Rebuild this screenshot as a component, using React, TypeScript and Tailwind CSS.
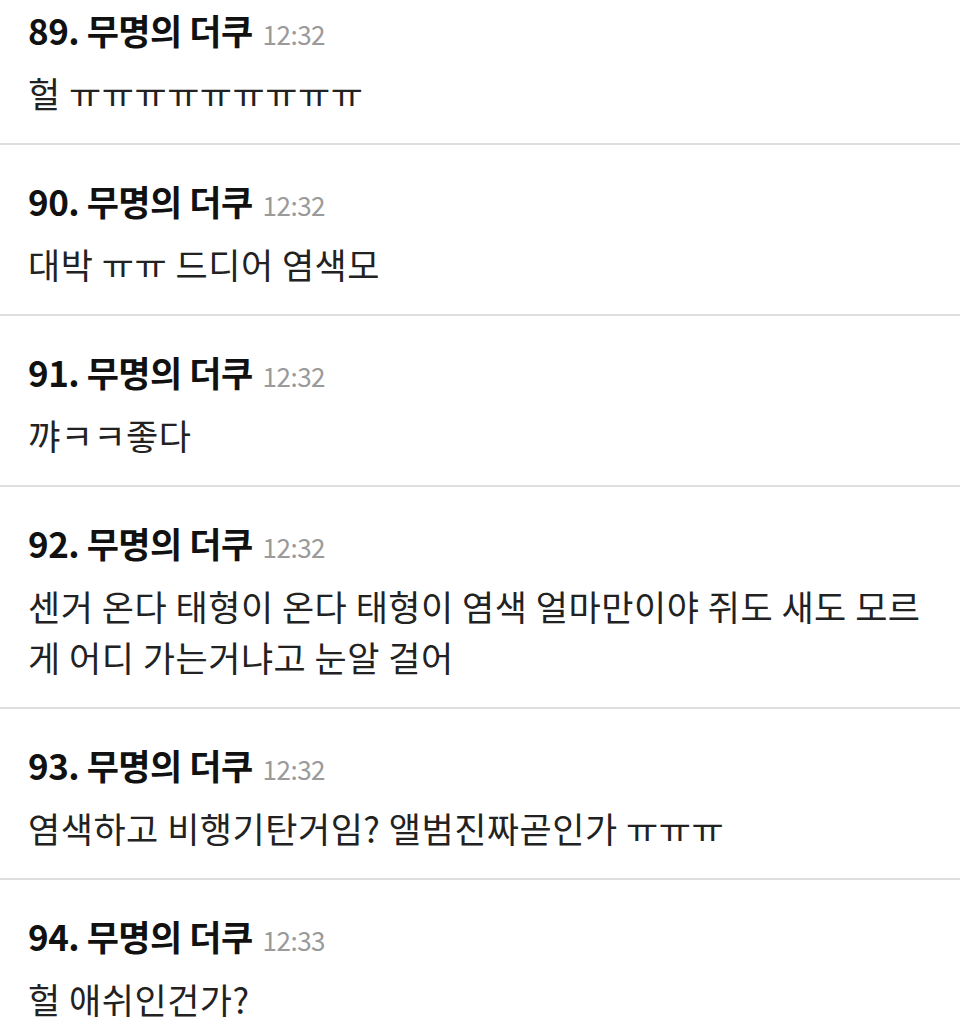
import React from 'react'

type Comment = {
    no: number
    time: string
    body: string
}

const comments: Comment[] = [
    { no: 89, time: '12:32', body: '헐 ㅠㅠㅠㅠㅠㅠㅠㅠㅠ' },
    { no: 90, time: '12:32', body: '대박 ㅠㅠ 드디어 염색모' },
    { no: 91, time: '12:32', body: '꺄ㅋㅋ좋다' },
    { no: 92, time: '12:32', body: '센거 온다 태형이 온다 태형이 염색 얼마만이야 쥐도 새도 모르게 어디 가는거냐고 눈알 걸어' },
    { no: 93, time: '12:32', body: '염색하고 비행기탄거임? 앨범진짜곧인가 ㅠㅠㅠ' },
    { no: 94, time: '12:33', body: '헐 애쉬인건가?' },
]

function App() {
    return (
        <div className="w-[960px] h-[1036px] overflow-hidden bg-white font-['Noto_Sans_CJK_KR',sans-serif]">
            {comments.map((c) => (
                <div key={c.no} className="pl-7 pr-[30px] pt-[36px] pb-[25px] border-b-2 border-[#dedede] first:pt-[10px]">
                    {/* 번호 + 닉네임 + 시간 */}
                    <div className="flex items-baseline gap-[10px] h-10 leading-10">
                        <span className="text-[35px] font-bold text-[#111] tracking-[-0.5px]">{c.no}. 무명의 더쿠</span>
                        <span className="text-[26px] text-[#9a9a9a] tracking-[-0.5px]">{c.time}</span>
                    </div>
                    <p className="mt-[17px] text-[35px] leading-[51px] text-[#222] tracking-[0.5px]">{c.body}</p>
                </div>
            ))}
        </div>
    )
}

export default App
